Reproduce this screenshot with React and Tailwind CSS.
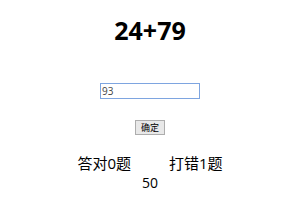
export default function App() {
  return (
    <div className="w-[300px] h-[200px] bg-white flex flex-col items-center" style={{ fontFamily: '"Open Sans", "Noto Sans CJK SC", sans-serif' }}>
      <div className="mt-[13px] text-[25px] leading-[34px] font-bold text-black">24+79</div>
      <input
        defaultValue="93"
        className="mt-[36px] w-[100px] h-[16px] border border-[#7ea5e0] px-[1px] text-[10px] leading-[14px] text-[#444] outline-none"
      />
      <button className="mt-[21px] h-[15px] px-[5px] border border-[#adadad] bg-[#e8e8e8] text-[9px] leading-[12px] text-black">
        确定
      </button>
      <div className="mt-[19px] flex gap-[38px] text-[15px] leading-[18px] text-black">
        <span>答对0题</span>
        <span>打错1题</span>
      </div>
      <div className="mt-[2px] text-[14px] leading-[17px] text-black">50</div>
    </div>
  );
}
